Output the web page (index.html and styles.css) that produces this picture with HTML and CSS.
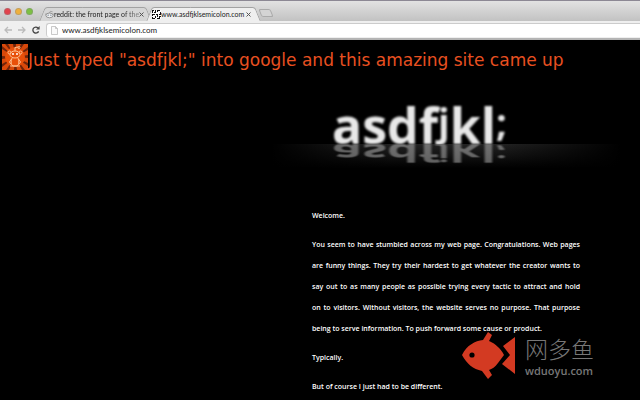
FILE: index.html
```
<!DOCTYPE html>
<html lang="en">
<head>
<meta charset="utf-8">
<title>www.asdfjklsemicolon.com</title>
<link rel="stylesheet" href="styles.css">
</head>
<body>
<header class="browser">
  <div class="tabstrip">
    <div class="lights">
      <button class="light red" aria-label="Close"></button>
      <button class="light amber" aria-label="Minimize"></button>
      <button class="light green" aria-label="Zoom"></button>
    </div>
    <div class="tab">
      <svg class="favicon" viewBox="0 0 10 10" aria-hidden="true"><ellipse cx="5" cy="6" rx="4" ry="2.6" fill="#eee" stroke="#777" stroke-width=".8"/><circle cx="3.5" cy="5.7" r=".8" fill="#789"/><circle cx="6.5" cy="5.7" r=".8" fill="#789"/><path d="M5 3.4L6 1.4L8.5 2M0 5L1.5 4M10 5L8.5 4" fill="none" stroke="#888" stroke-width=".7"/></svg>
      <a class="title faded" href="#reddit">reddit: the front page of the</a>
      <button class="close" aria-label="Close tab"><svg viewBox="0 0 5 5"><path d="M.5.5L4.500 4.500M4.500.5L.5 4.500" stroke="#555" stroke-width="1"/></svg></button>
    </div>
    <div class="tab active">
      <svg class="favicon" viewBox="0 0 9 9" aria-hidden="true"><path fill="#fff" d="M0 0h9v9H0z"/><path d="M0 0h2v1H1v2H0zM3 0h1v3H2V2h1zM5 0h3v1H6v1H5zM8 2h1v3H7V4h1zM0 4h3v1H1v1H0zM4 4h2v3H5V5H4zM0 7h1v1h2v1H0zM3 6h1v2H3zM7 6h2v1H8v2H5V8h2z" fill="#111"/></svg>
      <a class="title" href="#top">www.asdfjklsemicolon.com</a>
      <button class="close" aria-label="Close tab"><svg viewBox="0 0 5 5"><path d="M.5.5L4.500 4.500M4.500.5L.5 4.500" stroke="#555" stroke-width="1"/></svg></button>
    </div>
    <button class="newtab" aria-label="New tab"></button>
  </div>
  <div class="toolbar">
    <button class="nav" aria-label="Back"><svg viewBox="0 0 8 8"><path d="M8 4H1M4 1L1 4L4 7" fill="none" stroke="#bbb" stroke-width="1.3"/></svg></button>
    <button class="nav" aria-label="Forward"><svg viewBox="0 0 8 8"><path d="M0 4H7M4 1L7 4L4 7" fill="none" stroke="#bbb" stroke-width="1.3"/></svg></button>
    <button class="nav" aria-label="Reload"><svg viewBox="0 0 8 8"><path d="M6.6 5.4A3 3 0 1 1 6 1.9" fill="none" stroke="#444" stroke-width="1.3"/><path d="M7.6 0V3.6H4z" fill="#444"/></svg></button>
    <div class="address">
      <svg class="page-icon" viewBox="0 0 7 9" aria-hidden="true"><path d="M.5.5H4.5L6.5 2.5V8.5H.5zM4.5.5V2.5H6.5" fill="#fafafa" stroke="#bbb" stroke-width=".8"/></svg>
      <input class="url" aria-label="Address" value="www.asdfjklsemicolon.com">
    </div>
  </div>
</header>
<main class="page" id="top">
  <div class="caption">
    <svg class="avatar" viewBox="0 0 26 26" aria-hidden="true">
      <path fill="#d8480a" d="M0 0h26v26H0z"/>
      <path d="M13 13L0 2V5zM13 13L3 0H6zM13 13L11 0H14zM13 13L19 0H22zM13 13L26 3V6zM13 13L26 11V14zM13 13L26 19V22zM13 13L23 26H20zM13 13L15 26H12zM13 13L7 26H4zM13 13L0 23V20zM13 13L0 15V12z" fill="#70240a"/>
      <circle cx="13" cy="13" r="10" fill="#e8500a"/>
      <g fill="none" stroke="#ffc090" stroke-width="1"><ellipse cx="13" cy="10.500" rx="5" ry="3.500"/><path d="M13 7V3.500L16 3M10 14C8.500 18 9 21 11 22H15C17 21 17.500 18 16 14M9.500 15L7.500 18L9 20M16.500 15L18.500 18L17 20M8 22H18"/><circle cx="17" cy="3.500" r="1"/><circle cx="7.500" cy="8.500" r="1.500"/><circle cx="18.500" cy="8.500" r="1.500"/></g>
      <circle cx="11" cy="10" r="1" fill="#fff"/><circle cx="15" cy="10" r="1" fill="#fff"/>
    </svg>
    <h1 class="headline">Just typed "asdfjkl;" into google and this amazing site came up</h1>
  </div>
  <div class="column">
    <div class="banner">
      <div class="wordmark">asdf<span class="raised">j</span>kl<span class="raised">;</span></div>
      <div class="floor"><div class="wordmark reflection" aria-hidden="true">asdf<span class="raised">j</span>kl<span class="raised">;</span></div></div>
    </div>
    <article class="story">
      <p>Welcome.</p>
      <p class="full">You seem to have stumbled across my web page. Congratulations. Web pages<br>
      are funny things. They try their hardest to get whatever the creator wants to<br>
      say out to as many people as possible trying every tactic to attract and hold<br>
      on to visitors. Without visitors, the website serves no purpose. That purpose<br>
      <span class="closing">being to serve information. To push forward some cause or product.</span></p>
      <p>Typically.</p>
      <p>But of course I just had to be different.</p>
    </article>
  </div>
</main>
<aside class="watermark">
  <svg class="fish" viewBox="0 0 54 48" aria-hidden="true"><path d="M0 23C5 13 13 9 21 8L26 0L30 3L27 9C34 12 39 17 42 23L36 31C33 35 30 37 27 38L30 43L26 47L20 39C11 37 5 32 0 23Z" fill="#d33a22"/><path d="M41 14L53 5V42L40 32L48 23Z" fill="#d33a22"/><circle cx="10" cy="23" r="2.600" fill="#000"/></svg>
  <div class="mark-text"><span class="mark-name" lang="zh">网多鱼</span><span class="mark-url">wduoyu.com</span></div>
</aside>
</body>
</html>
```
FILE: styles.css
```
* { box-sizing: border-box; }
body {
  margin: 0;
  min-height: 100vh;
  position: relative;
  overflow: hidden;
  background: #000;
  font-family: Lato, "Open Sans", sans-serif;
}
button { border: 0; padding: 0; background: none; }
p, h1 { margin: 0; }

.tabstrip {
  display: flex;
  align-items: flex-end;
  height: 21px;
  padding-left: 4px;
  border-top: 1px solid #8c8894;
  background: linear-gradient(#e2e2e2, #c2c2c2);
}
.lights { display: flex; gap: 4px; width: 38px; padding-bottom: 6px; }
.light { width: 7px; height: 7px; border-radius: 50%; border: 1px solid #8886; }
.red { background: #e2424c; }
.amber { background: #efb03c; }
.green { background: #7cc043; }

.tab {
  display: flex;
  align-items: center;
  position: relative;
  z-index: 0;
  width: 107px;
  height: 14px;
  padding: 0 4px 0 3px;
}
.tab::before, .tab::after {
  content: "";
  position: absolute;
  z-index: -1;
  inset: 0 0 0 40%;
  background: #d6d6d6;
  border: 1px solid #a2a2a2;
  border-width: 1px 1px 0 0;
  border-radius: 0 3px 0 0;
  transform: skewX(22deg);
}
.tab::before {
  inset: 0 40% 0 0;
  border-width: 1px 0 0 1px;
  border-radius: 3px 0 0 0;
  transform: skewX(-22deg);
}
.tab.active { width: 109px; z-index: 1; }
.tab.active::before, .tab.active::after { background: #efefef; }
.favicon { flex: none; width: 9px; height: 9px; }
.title {
  flex: 1;
  white-space: nowrap;
  font: 7px/12px Lato, sans-serif;
  color: #222;
  text-decoration: none;
}
.faded { mask-image: linear-gradient(90deg, #000 80%, #0006); }
.close { width: 5px; height: 5px; margin-right: 3px; }
.close svg { display: block; width: 5px; height: 5px; }
.newtab {
  width: 12px;
  height: 8px;
  margin: 0 0 4px 2px;
  border: 1px solid #aaa;
  border-radius: 2px;
  background: #d4d4d4;
  transform: skewX(22deg);
}

.toolbar {
  display: flex;
  align-items: center;
  gap: 6px;
  height: 19px;
  padding-left: 4px;
  background: #efefef;
  border-bottom: 2px solid #b4b4b4;
}
.nav { width: 8px; height: 8px; }
.nav svg { display: block; width: 8px; height: 8px; }
.address {
  display: flex;
  align-items: center;
  flex: 1;
  gap: 4px;
  height: 14px;
  padding-left: 4px;
  background: #fff;
  border: 1px solid #ccc;
  border-width: 1px 0 0 1px;
  border-radius: 3px 0 0 3px;
}
.page-icon { width: 7px; height: 9px; }
.url {
  flex: 1;
  height: 12px;
  padding: 0;
  border: 0;
  outline: 0;
  background: none;
  font: 8px/12px Lato, sans-serif;
  color: #222;
}

.caption { display: flex; align-items: center; height: 40px; padding: 0 0 6px 2px; }
.avatar { flex: none; width: 26px; height: 26px; }
.headline {
  font: 17px/24px "DejaVu Sans", sans-serif;
  color: #e85020;
  white-space: nowrap;
  padding-top: 6px;
}

.column { width: 348px; margin: 0 20px 0 auto; }
.banner { height: 125px; padding-top: 16px; }
.wordmark {
  height: 48px;
  padding-left: 60px;
  font: bold 50px/58px "Open Sans", sans-serif;
  color: #e8e8e8;
  filter: blur(1px);
  clip-path: inset(0);
}
.raised { font-size: 38px; line-height: 1; vertical-align: 8px; }
.floor {
  height: 24px;
  overflow: hidden;
  background: linear-gradient(90deg, #000, transparent 35%, transparent 65%, #000), linear-gradient(#222, #000);
}
.reflection {
  transform-origin: top;
  transform: translateY(24px) rotateX(120deg);
  opacity: 0.4;
}

.story {
  display: flex;
  flex-direction: column;
  gap: 8px;
  width: 268px;
  margin-left: 40px;
  font: 600 7px/21px "Open Sans", sans-serif;
  color: #fff;
}
.full { text-align: justify; text-align-last: justify; }
.closing { display: block; text-align-last: left; }

.watermark { position: absolute; left: 462px; top: 332px; display: flex; gap: 9px; }
.fish { width: 54px; height: 48px; }
.mark-text { display: flex; flex-direction: column; color: #777; }
.mark-name { font: 300 23px/32px "Noto Sans CJK SC", sans-serif; }
.mark-url { font: 600 11px/14px "Open Sans", sans-serif; }
```
